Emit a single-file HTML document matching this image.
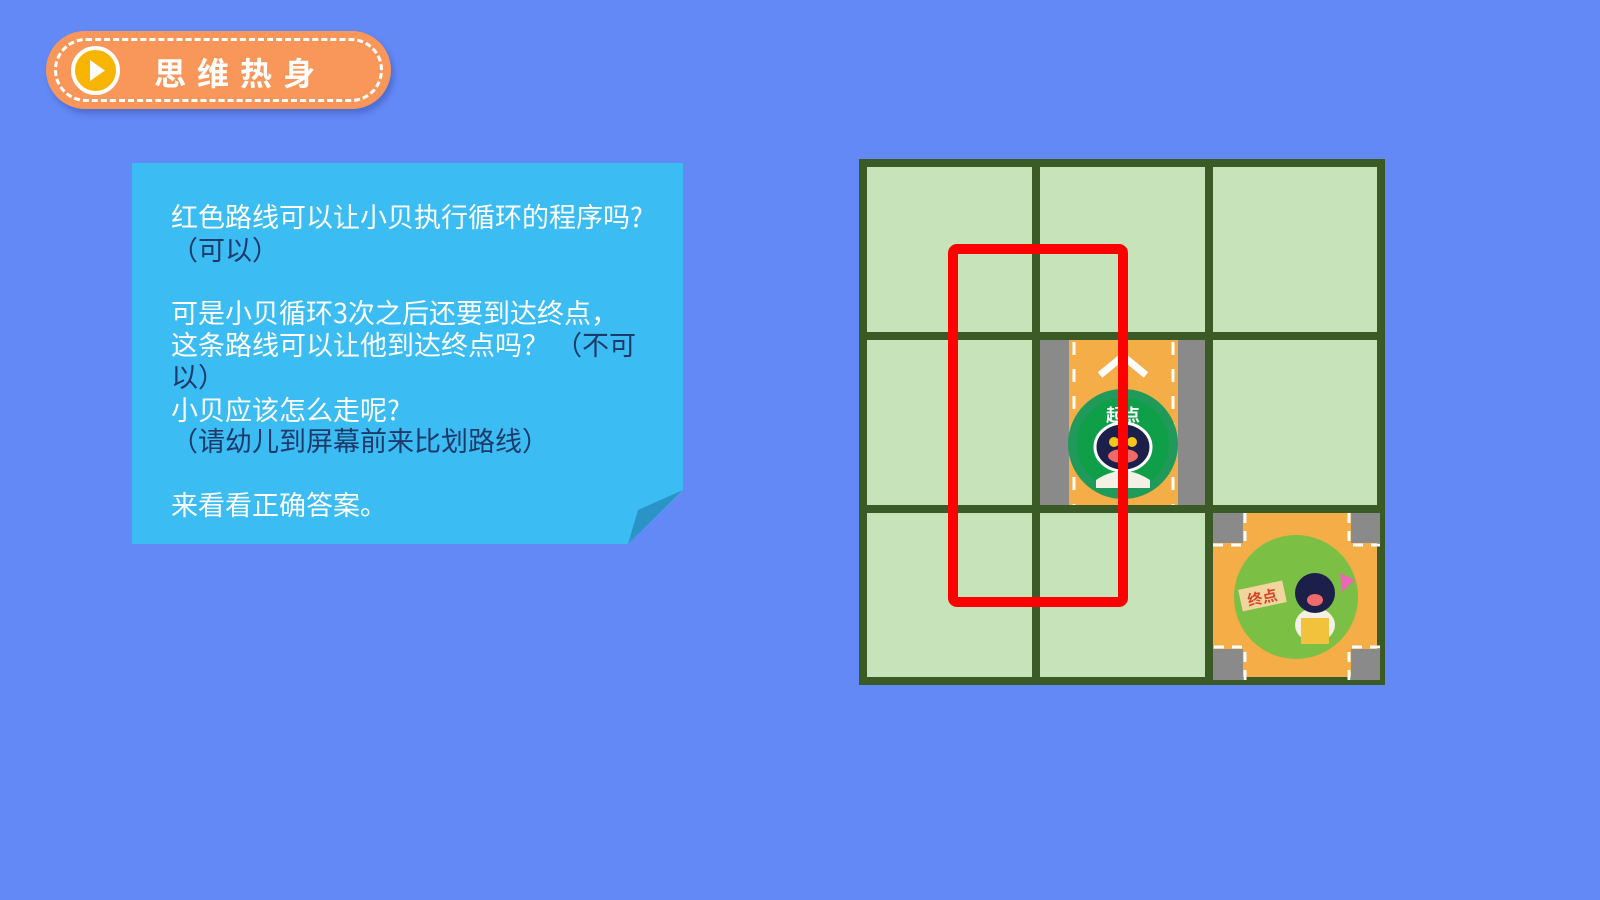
<!DOCTYPE html>
<html><head><meta charset="utf-8"><style>
*{margin:0;padding:0;box-sizing:border-box}
body{width:1600px;height:900px;background:#6389f7;position:relative;overflow:hidden;font-family:"Liberation Sans","Noto Sans CJK SC",sans-serif}
.pill{position:absolute;left:46px;top:31px;width:345px;height:78px;border-radius:39px;background:#f9975a;box-shadow:3px 5px 6px rgba(40,60,140,.35)}
.pill .dash{position:absolute;left:8px;top:7px;right:8px;bottom:7px;border:3px dashed #fff;border-radius:32px}
.pill .play{position:absolute;left:25px;top:15px;width:49px;height:49px;border-radius:50%;background:#f7b500;border:4px solid #fff}
.pill .t{position:absolute;left:108px;top:18px;color:#fff;font-size:32px;font-weight:bold;letter-spacing:11px;font-family:"Noto Sans CJK SC",sans-serif}
.note{position:absolute;left:132px;top:163px;width:551px;height:381px;background:#3bbcf2;box-shadow:3px 4px 4px rgba(30,50,120,.35);clip-path:polygon(0 0,100% 0,100% 86%,90% 100%,0 100%,0 0)}
.fold{position:absolute;left:628px;top:490px;width:55px;height:54px}
.ln{position:absolute;left:171px;color:#fff;font-size:27px;line-height:32px;white-space:nowrap;font-family:"Noto Sans CJK SC",sans-serif}
.d{color:#1d3a6a}
.grid{position:absolute;left:859px;top:159px;width:526px;height:526px;background:#3a5a26}
.c{position:absolute;background:#c7e3b9}
</style></head><body>
<div class="pill"><div class="dash"></div><div class="play"><svg width="41" height="41" viewBox="0 0 41 41" style="position:absolute;left:0;top:0"><path d="M15 10 L30 20.5 L15 31Z" fill="#fff"/></svg></div><div class="t">思维热身</div></div>

<div class="note"></div>
<svg class="fold" viewBox="0 0 55 54"><path d="M55 0 L0 54 L10 20 Z" fill="#2a94c7"/></svg>
<div class="ln" style="top:200px">红色路线可以让小贝执行循环的程序吗?</div>
<div class="ln d" style="top:233px">（可以）</div>
<div class="ln" style="top:296px">可是小贝循环3次之后还要到达终点，</div>
<div class="ln" style="top:328px">这条路线可以让他到达终点吗？ <span class="d">（不可</span></div>
<div class="ln d" style="top:360px">以）</div>
<div class="ln" style="top:393px">小贝应该怎么走呢?</div>
<div class="ln d" style="top:424px">（请幼儿到屏幕前来比划路线）</div>
<div class="ln" style="top:488px">来看看正确答案。</div>

<div class="grid">
<div class="c" style="left:8px;top:8px;width:165px;height:165px"></div>
<div class="c" style="left:181px;top:8px;width:165px;height:165px"></div>
<div class="c" style="left:354px;top:8px;width:164px;height:165px"></div>
<div class="c" style="left:8px;top:181px;width:165px;height:165px"></div>
<div class="c" style="left:181px;top:181px;width:165px;height:165px;background:#8a8a8a"></div>
<div class="c" style="left:354px;top:181px;width:164px;height:165px"></div>
<div class="c" style="left:8px;top:354px;width:165px;height:164px"></div>
<div class="c" style="left:181px;top:354px;width:165px;height:164px"></div>
<div class="c" style="left:354px;top:354px;width:164px;height:164px;background:#f4ad47"></div>
</div>
<svg style="position:absolute;left:0;top:0" width="1600" height="900">
<rect x="1069" y="340" width="109" height="165" fill="#f4ad47"/>
<g stroke="#fff" stroke-width="3" stroke-dasharray="13 14"><line x1="1074" y1="342" x2="1074" y2="505"/><line x1="1173" y1="342" x2="1173" y2="505"/></g>
<path d="M1100 375 L1123 356 L1146 375" stroke="#fff" stroke-width="7" fill="none"/>
<circle cx="1123" cy="444" r="55" fill="#1f9a5a"/><circle cx="1123" cy="444" r="46" fill="#0f9f48"/>
<text x="1123" y="421" font-size="17" font-weight="bold" fill="#fff" text-anchor="middle" font-family="Noto Sans CJK SC,sans-serif">起点</text>
<ellipse cx="1123" cy="447" rx="28" ry="24" fill="#1c1f4a" stroke="#fff" stroke-width="3"/>
<ellipse cx="1123" cy="456" rx="15" ry="7" fill="#ef6a6a"/>
<circle cx="1114" cy="442" r="5" fill="#f5c518"/><circle cx="1132" cy="442" r="5" fill="#f5c518"/>
<path d="M1096 480 Q1123 462 1150 480 L1150 488 L1096 488Z" fill="#f3f0e6"/>
<g fill="#8a8a8a"><rect x="1213" y="513" width="30" height="30"/><rect x="1351" y="513" width="29" height="30"/><rect x="1213" y="649" width="30" height="31"/><rect x="1351" y="649" width="29" height="31"/></g>
<g stroke="#fff" stroke-width="3" fill="none" stroke-dasharray="10 8"><path d="M1245 513 V545 H1213"/><path d="M1349 513 V545 H1380"/><path d="M1245 680 V647 H1213"/><path d="M1349 680 V647 H1380"/></g>
<circle cx="1296" cy="597" r="62" fill="#7bbf45"/>
<rect x="1240" y="585" width="45" height="22" fill="#f1d59e" transform="rotate(-12 1262 596)"/>
<text x="1262" y="603" font-size="15" font-weight="bold" fill="#d9452b" text-anchor="middle" transform="rotate(-12 1262 596)" font-family="Noto Sans CJK SC,sans-serif">终点</text>
<ellipse cx="1315" cy="625" rx="20" ry="17" fill="#f4f0e4"/>
<rect x="1301" y="618" width="28" height="26" fill="#f2c23c"/>
<circle cx="1315" cy="593" r="20" fill="#1c1f4a"/><ellipse cx="1315" cy="600" rx="8" ry="6" fill="#ef6a6a"/>
<path d="M1340 573 L1355 580 L1342 592Z" fill="#e96ab3"/>
<rect x="953" y="249" width="170" height="353" rx="4" fill="none" stroke="#ff0000" stroke-width="10"/>
</svg>
</body></html>
